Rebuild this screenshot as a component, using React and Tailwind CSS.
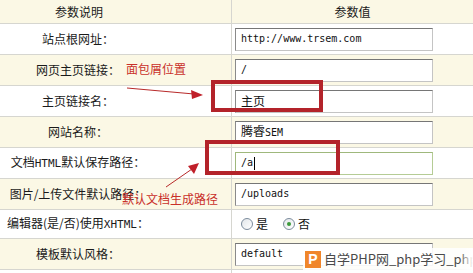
import React from 'react';

const cjk = { fontFamily: '"Noto Sans CJK SC", "DejaVu Sans", sans-serif' };
const mono = { fontFamily: '"DejaVu Sans Mono", "Liberation Mono", monospace' };

const Field = ({ children, focused }) => (
  <div
    className={`ml-[3px] flex h-[23px] w-[198px] items-center bg-white pl-[5px] text-[12px] text-[#111] border ${
      focused
        ? 'border-[#b5cc95] border-t-[#9fb87c] border-l-[#9fb87c]'
        : 'border-[#c4c4c4] border-t-[#767676] border-l-[#8a8a8a]'
    }`}
  >
    <span className="flex items-baseline leading-[20px]">{children}</span>
  </div>
);

const Mono = ({ children }) => (
  <span className="text-[10px]" style={mono}>{children}</span>
);

const Radio = ({ checked }) => (
  <span className="flex h-[12px] w-[12px] items-center justify-center rounded-full border border-[#7b8b9c] bg-gradient-to-br from-[#e2e6ea] to-white">
    {checked && <span className="h-[4px] w-[4px] rounded-full bg-[#3c9a3c]" />}
  </span>
);

const rows = [
  { label: '站点根网址：', value: <Field><Mono>http://www.trsem.com</Mono></Field> },
  { label: '网页主页链接：', value: <Field><Mono>/</Mono></Field> },
  { label: '主页链接名：', value: <Field><span style={cjk}>主页</span></Field> },
  { label: '网站名称：', value: <Field><span style={cjk}>腾睿</span><Mono>SEM</Mono></Field> },
  {
    label: <>文档<span className="text-[11px]" style={mono}>HTML</span>默认保存路径：</>,
    value: (
      <Field focused>
        <Mono>/a</Mono>
        <span className="ml-px h-[13px] w-px self-center bg-black" />
      </Field>
    ),
  },
  { label: '图片/上传文件默认路径：', value: <Field><Mono>/uploads</Mono></Field> },
  {
    label: <>编辑器(是/否)使用<span className="text-[11px]" style={mono}>XHTML</span>：</>,
    h: 'h-[29px]',
    value: (
      <div className="ml-[9px] flex items-center gap-[3px] text-[12px] text-[#111]" style={cjk}>
        <Radio />
        <span className="mr-[12px]">是</span>
        <Radio checked />
        <span>否</span>
      </div>
    ),
  },
  { label: '模板默认风格：', value: <Field><Mono>default</Mono></Field> },
];

export default function App() {
  return (
    <div className="relative h-[273px] w-[473px] overflow-hidden bg-white text-[#1a1a1a]" style={cjk}>
      <div className="grid grid-cols-[232px_1fr]">
        <div className="flex h-[24px] items-center border-b border-r border-[#d6d6d0] bg-[#fbf8e5]">
          <div className="w-[158px] text-center text-[12px]">参数说明</div>
        </div>
        <div className="flex h-[24px] items-center justify-center border-b border-[#d6d6d0] bg-[#fbf8e5] text-[12px]">
          参数值
        </div>
        {rows.map((r, i) => {
          const bg = i % 2 === 1 ? 'bg-[#fbf8e5]' : 'bg-white';
          const h = r.h || 'h-[31px]';
          return (
            <React.Fragment key={i}>
              <div className={`flex ${h} items-center border-b border-r border-[#d6d6d0] ${bg}`}>
                <div className="w-[156px] whitespace-nowrap text-center text-[12px]">{r.label}</div>
              </div>
              <div className={`flex ${h} items-center border-b border-[#d6d6d0] ${bg}`}>{r.value}</div>
            </React.Fragment>
          );
        })}
        <div className="h-[10px] border-r border-[#d6d6d0] bg-white" />
        <div className="h-[10px] bg-white" />
      </div>

      {/* annotations */}
      <div className="absolute left-[126px] top-[60px] text-[12px] text-[#c9302a]">面包屑位置</div>
      <div className="absolute left-[122px] top-[190px] text-[12px] text-[#c9302a]">默认文档生成路径</div>
      <div className="absolute left-[211px] top-[80px] h-[32px] w-[112px] border-[4px] border-[#b3232a]" />
      <div className="absolute left-[205px] top-[140px] h-[35px] w-[135px] border-[4px] border-[#b3232a]" />
      <svg className="pointer-events-none absolute left-0 top-0" width="473" height="273">
        <line x1="127" y1="88" x2="194" y2="94" stroke="#b82a2a" strokeWidth="1" />
        <polygon points="203,95 191,90 192,99" fill="#c0202a" />
        <line x1="166" y1="187" x2="192" y2="169" stroke="#b82a2a" strokeWidth="1" />
        <polygon points="199,163 188,166 194,174" fill="#c0202a" />
      </svg>

      {/* watermark */}
      <div className="absolute left-[303px] top-[248px] flex h-[22px] w-[170px] items-center gap-[3px] overflow-hidden whitespace-nowrap bg-white/85 pl-[2px]">
        <span className="flex h-[17px] w-[16px] shrink-0 items-center justify-center bg-[#f0862a] text-[14px] font-bold leading-none text-white" style={{ fontFamily: '"Liberation Sans", sans-serif' }}>
          P
        </span>
        <span className="text-[13px] text-[#4a4a4a]">自学PHP网_php学习_php教程</span>
        <div className="absolute right-0 top-0 h-full w-[14px] bg-gradient-to-r from-transparent to-white" />
      </div>
    </div>
  );
}
